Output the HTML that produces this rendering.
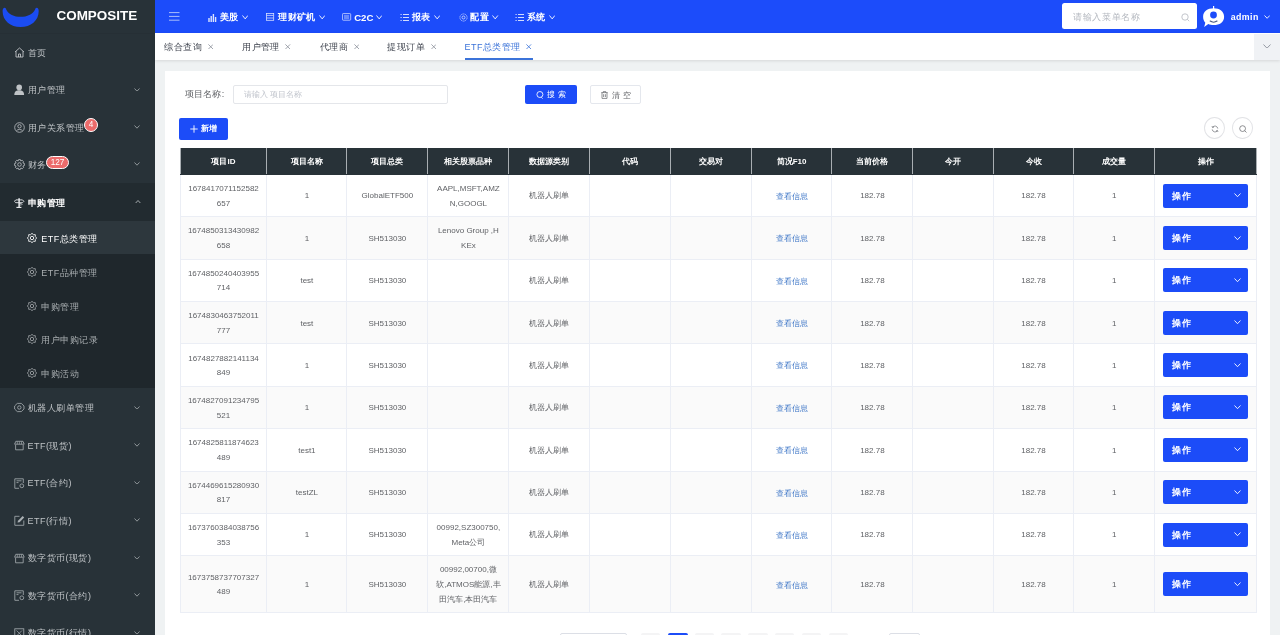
<!DOCTYPE html>
<html><head><meta charset="utf-8"><style>*{box-sizing:border-box;margin:0;padding:0}
html,body{width:1280px;height:635px;overflow:hidden;background:#eff2f3;font-family:"Liberation Sans",sans-serif;}
body{position:relative}
.abs{position:absolute}
#side{position:absolute;left:0;top:0;width:155px;height:635px;background:#283238;overflow:hidden}
#logo{position:absolute;left:0;top:0;width:155px;height:33.5px;background:#283238;border-bottom:1px solid #262f35}
#logo .t{position:absolute;left:56.5px;top:8.2px;font-size:13.45px;font-weight:bold;color:#fff;line-height:16px}
.mi{position:absolute;left:0;width:155px;height:37.5px;color:#bfc3c6;font-size:9px;letter-spacing:0.5px;line-height:37.5px;white-space:nowrap}
.mi .tx{position:absolute;left:27.5px;top:1.3px}
.sub{position:absolute;left:0;width:155px;height:33.5px;color:#a9aeb1;font-size:9px;letter-spacing:0.5px;line-height:33.5px;white-space:nowrap}
.sub .tx{position:absolute;left:41.2px;top:2.8px}
.badge{position:absolute;background:#ec6b6b;color:#fff;font-size:8.2px;line-height:11px;height:13px;border-radius:7.2px;text-align:center;border:1px solid #fff}
#top{position:absolute;left:155px;top:0;width:1125px;height:33px;background:#1c4cfa}
.nav{position:absolute;top:0.8px;height:33px;line-height:33px;color:#fff;font-size:9px;letter-spacing:0.4px;font-weight:bold;white-space:nowrap}
#tabs{position:absolute;left:155px;top:33px;width:1125px;height:26.8px;background:#fff;box-shadow:0 1px 3px rgba(0,0,0,.11)}
.tab{position:absolute;top:1px;height:27px;line-height:27px;font-size:9px;letter-spacing:0.42px;white-space:nowrap}
#card{position:absolute;left:165px;top:70.8px;width:1105px;height:600px;background:#fff}
table{border-collapse:collapse;table-layout:fixed;position:absolute;left:179.6px;top:148.3px;width:1076.4px}
th{background:#283238;color:#fff;font-size:8px;font-weight:bold;height:26.2px;text-align:center;border-left:1px solid #a9aeb2;border-right:1px solid #a9aeb2;border-bottom:1px solid #283238;padding:0}
td{font-size:8px;color:#606266;line-height:14.6px;padding:7.1px 7.4px 5.1px;text-align:center;border:1px solid #ebeef5;word-break:break-all;vertical-align:middle}
tr.s td{background:#fafafa}
.link{color:#3b74c6;position:relative;top:0.6px}
.op{display:block;width:85px;height:24px;background:#1c4cf8;border-radius:2px;position:relative;top:-1.1px;margin-left:0px;color:#fff;font-size:9px;letter-spacing:0.45px;font-weight:bold;text-align:left;line-height:24px;padding-left:9.8px}
td:first-child{padding-left:6px;padding-right:6px}
body{will-change:transform}
</style></head><body>
<div id="side">
  <div id="logo">
    <svg class="abs" style="left:0;top:0" width="45" height="33" viewBox="0 0 45 33"><path d="M4.7 7.8 C3.3 7.8 2.6 9.4 2.6 11.2 C2.6 20.5 10.5 27 20.6 27 C30.7 27 38.7 20.5 38.7 11.2 C38.7 9.3 38 7.8 36.7 7.8 C35.8 7.8 35.4 8.6 35.1 9.4 C32.8 14.2 27 16.8 20.6 16.8 C14.2 16.8 8.5 14.2 6.2 9.4 C5.9 8.6 5.6 7.8 4.7 7.8 Z" fill="#1b4cf2"/></svg>
    <div class="t">COMPOSITE</div>
  </div>
  <div class="mi" style="top:33.5px"><svg class="abs" style="left:13.8px;top:13.5px" width="11" height="11" viewBox="0 0 11 11"><path d="M1 5 L5.5 1 L10 5 M2 4.2 V10 H9 V4.2 M4.5 10 V7 H6.5 V10" fill="none" stroke="#bfc3c6" stroke-width="0.9"/></svg><span class="tx">首页</span></div><div class="mi" style="top:70.9px"><svg class="abs" style="left:13.8px;top:13.5px" width="11" height="11" viewBox="0 0 11 11"><circle cx="5.2" cy="3.4" r="2.8" fill="#bfc3c6"/><path d="M0.3 11 C0.3 7.3 2.6 6.3 5.2 6.3 C7.8 6.3 10.1 7.3 10.1 11 Z" fill="#bfc3c6"/></svg><span class="tx">用户管理</span><svg class="abs" style="left:134px;top:16.8px" width="6" height="3.5" viewBox="0 0 6 3.5"><path d="M0.5 0.5 L3.0 3.2 L5.5 0.5" fill="none" stroke="#9aa0a4" stroke-width="0.9"/></svg></div><div class="mi" style="top:108.3px"><svg class="abs" style="left:13.8px;top:13.5px" width="11" height="11" viewBox="0 0 11 11"><circle cx="5.5" cy="5.5" r="4.8" fill="none" stroke="#bfc3c6" stroke-width="0.8"/><circle cx="5.5" cy="4.3" r="1.7" fill="none" stroke="#bfc3c6" stroke-width="0.8"/><path d="M2.6 8.8 C3.3 7 7.7 7 8.4 8.8" fill="none" stroke="#bfc3c6" stroke-width="0.8"/></svg><span class="tx">用户关系管理</span><svg class="abs" style="left:134px;top:16.8px" width="6" height="3.5" viewBox="0 0 6 3.5"><path d="M0.5 0.5 L3.0 3.2 L5.5 0.5" fill="none" stroke="#9aa0a4" stroke-width="0.9"/></svg></div><div class="mi" style="top:145.6px"><svg class="abs" style="left:13.8px;top:13.5px" width="11" height="11" viewBox="0 0 11 11"><circle cx="5.5" cy="5.5" r="1.8" fill="none" stroke="#bfc3c6" stroke-width="0.8"/><path d="M4.6 0.6 H6.4 L6.8 2 L8.1 1.3 L9.5 2.6 L8.9 4 L10.4 4.5 V6.5 L8.9 7 L9.6 8.4 L8.3 9.7 L6.9 9 L6.4 10.4 H4.6 L4.1 9 L2.7 9.7 L1.4 8.4 L2.1 7 L0.6 6.5 V4.5 L2.1 4 L1.4 2.6 L2.8 1.3 L4.1 2 Z" fill="none" stroke="#bfc3c6" stroke-width="0.8"/></svg><span class="tx">财务</span><svg class="abs" style="left:134px;top:16.8px" width="6" height="3.5" viewBox="0 0 6 3.5"><path d="M0.5 0.5 L3.0 3.2 L5.5 0.5" fill="none" stroke="#9aa0a4" stroke-width="0.9"/></svg></div><div class="badge" style="left:83.8px;top:117.9px;width:14.3px;height:14.2px;line-height:12.2px">4</div><div class="badge" style="left:46.1px;top:155.8px;width:22.8px;height:13.4px;line-height:11.4px">127</div><div class="mi open" style="top:183px;height:37.7px;background:#222b30;color:#fff"><svg class="abs" style="left:13.8px;top:13.5px" width="11" height="11" viewBox="0 0 11 11"><path d="M5.1 1.3 V10.2" stroke="#e8eaec" stroke-width="1.5"/><path d="M1.8 2.9 H8.5 L9.9 4.3 L8.5 5.7 H1.8 L0.4 4.3 Z" fill="none" stroke="#e8eaec" stroke-width="0.9"/><path d="M5.1 6.6 H7.4 L8.1 7.3 L7.4 8 H5.1" fill="none" stroke="#e8eaec" stroke-width="0.7"/><path d="M2.4 10.5 H7.4" stroke="#e8eaec" stroke-width="1.3"/></svg><span class="tx" style="font-weight:bold;top:2.2px">申购管理</span><svg class="abs" style="left:134.5px;top:16.5px" width="6" height="3.5" viewBox="0 0 6 3.5"><path d="M0.5 3.2 L3.0 0.5 L5.5 3.2" fill="none" stroke="#b6babd" stroke-width="0.9"/></svg></div><div class="abs" style="left:0;top:220.7px;width:155px;height:167.7px;background:#1f272c"></div><div class="sub" style="top:220.7px;background:#2d373d;color:#fff;"><svg class="abs" style="left:27px;top:12.8px" width="10" height="10" viewBox="0 0 10 10"><path d="M5.00 0.30 L6.38 1.67 L8.32 1.68 L8.33 3.62 L9.70 5.00 L8.33 6.38 L8.32 8.32 L6.38 8.33 L5.00 9.70 L3.62 8.33 L1.68 8.32 L1.67 6.38 L0.30 5.00 L1.67 3.62 L1.68 1.68 L3.62 1.67 Z" fill="none" stroke="#fff" stroke-width="0.85" stroke-linejoin="round"/><circle cx="5" cy="5" r="1.7" fill="none" stroke="#fff" stroke-width="0.9"/></svg><span class="tx">ETF总类管理</span></div><div class="sub" style="top:254.23999999999998px;"><svg class="abs" style="left:27px;top:12.8px" width="10" height="10" viewBox="0 0 10 10"><path d="M5.00 0.30 L6.38 1.67 L8.32 1.68 L8.33 3.62 L9.70 5.00 L8.33 6.38 L8.32 8.32 L6.38 8.33 L5.00 9.70 L3.62 8.33 L1.68 8.32 L1.67 6.38 L0.30 5.00 L1.67 3.62 L1.68 1.68 L3.62 1.67 Z" fill="none" stroke="#9ea3a6" stroke-width="0.85" stroke-linejoin="round"/><circle cx="5" cy="5" r="1.7" fill="none" stroke="#9ea3a6" stroke-width="0.9"/></svg><span class="tx">ETF品种管理</span></div><div class="sub" style="top:287.78px;"><svg class="abs" style="left:27px;top:12.8px" width="10" height="10" viewBox="0 0 10 10"><path d="M5.00 0.30 L6.38 1.67 L8.32 1.68 L8.33 3.62 L9.70 5.00 L8.33 6.38 L8.32 8.32 L6.38 8.33 L5.00 9.70 L3.62 8.33 L1.68 8.32 L1.67 6.38 L0.30 5.00 L1.67 3.62 L1.68 1.68 L3.62 1.67 Z" fill="none" stroke="#9ea3a6" stroke-width="0.85" stroke-linejoin="round"/><circle cx="5" cy="5" r="1.7" fill="none" stroke="#9ea3a6" stroke-width="0.9"/></svg><span class="tx">申购管理</span></div><div class="sub" style="top:321.32px;"><svg class="abs" style="left:27px;top:12.8px" width="10" height="10" viewBox="0 0 10 10"><path d="M5.00 0.30 L6.38 1.67 L8.32 1.68 L8.33 3.62 L9.70 5.00 L8.33 6.38 L8.32 8.32 L6.38 8.33 L5.00 9.70 L3.62 8.33 L1.68 8.32 L1.67 6.38 L0.30 5.00 L1.67 3.62 L1.68 1.68 L3.62 1.67 Z" fill="none" stroke="#9ea3a6" stroke-width="0.85" stroke-linejoin="round"/><circle cx="5" cy="5" r="1.7" fill="none" stroke="#9ea3a6" stroke-width="0.9"/></svg><span class="tx">用户申购记录</span></div><div class="sub" style="top:354.86px;"><svg class="abs" style="left:27px;top:12.8px" width="10" height="10" viewBox="0 0 10 10"><path d="M5.00 0.30 L6.38 1.67 L8.32 1.68 L8.33 3.62 L9.70 5.00 L8.33 6.38 L8.32 8.32 L6.38 8.33 L5.00 9.70 L3.62 8.33 L1.68 8.32 L1.67 6.38 L0.30 5.00 L1.67 3.62 L1.68 1.68 L3.62 1.67 Z" fill="none" stroke="#9ea3a6" stroke-width="0.85" stroke-linejoin="round"/><circle cx="5" cy="5" r="1.7" fill="none" stroke="#9ea3a6" stroke-width="0.9"/></svg><span class="tx">申购活动</span></div><div class="mi" style="top:388.9px"><svg class="abs" style="left:13.8px;top:13.5px" width="11" height="11" viewBox="0 0 11 11"><circle cx="5.3" cy="5.5" r="1.7" fill="none" stroke="#aab0b4" stroke-width="0.8"/><path d="M3.3 1.4 H7.3 L10 4 V7 L7.3 9.6 H3.3 L0.6 7 V4 Z" fill="none" stroke="#aab0b4" stroke-width="0.8"/></svg><span class="tx">机器人刷单管理</span><svg class="abs" style="left:134px;top:16.8px" width="6" height="3.5" viewBox="0 0 6 3.5"><path d="M0.5 0.5 L3.0 3.2 L5.5 0.5" fill="none" stroke="#9aa0a4" stroke-width="0.9"/></svg></div><div class="mi" style="top:426.45px"><svg class="abs" style="left:13.8px;top:13.5px" width="11" height="11" viewBox="0 0 11 11"><path d="M1.8 1.3 H9 L10.2 4.2 H0.6 Z M1.6 4.8 V9.8 H9.2 V4.8" fill="none" stroke="#aab0b4" stroke-width="0.8"/><path d="M3.3 1.5 V4.2 M5.4 1.5 V4.2 M7.5 1.5 V4.2" stroke="#aab0b4" stroke-width="0.6"/></svg><span class="tx">ETF(现货)</span><svg class="abs" style="left:134px;top:16.8px" width="6" height="3.5" viewBox="0 0 6 3.5"><path d="M0.5 0.5 L3.0 3.2 L5.5 0.5" fill="none" stroke="#9aa0a4" stroke-width="0.9"/></svg></div><div class="mi" style="top:464.0px"><svg class="abs" style="left:13.8px;top:13.5px" width="11" height="11" viewBox="0 0 11 11"><path d="M5 10.3 H0.8 V0.8 H9.3 V5 M2.5 2.8 H7.5 M2.5 4.6 H4.5" fill="none" stroke="#aab0b4" stroke-width="0.8"/><circle cx="7.8" cy="7.8" r="1.9" fill="none" stroke="#aab0b4" stroke-width="0.8"/></svg><span class="tx">ETF(合约)</span><svg class="abs" style="left:134px;top:16.8px" width="6" height="3.5" viewBox="0 0 6 3.5"><path d="M0.5 0.5 L3.0 3.2 L5.5 0.5" fill="none" stroke="#9aa0a4" stroke-width="0.9"/></svg></div><div class="mi" style="top:501.54999999999995px"><svg class="abs" style="left:13.8px;top:13.5px" width="11" height="11" viewBox="0 0 11 11"><path d="M5.5 1.3 H0.8 V10.3 H9.8 V5.5" fill="none" stroke="#aab0b4" stroke-width="0.8"/><path d="M3.5 7.5 L4 5.8 L8.7 1.1 L10.2 2.6 L5.5 7.3 Z" fill="#aab0b4"/></svg><span class="tx">ETF(行情)</span><svg class="abs" style="left:134px;top:16.8px" width="6" height="3.5" viewBox="0 0 6 3.5"><path d="M0.5 0.5 L3.0 3.2 L5.5 0.5" fill="none" stroke="#9aa0a4" stroke-width="0.9"/></svg></div><div class="mi" style="top:539.0999999999999px"><svg class="abs" style="left:13.8px;top:13.5px" width="11" height="11" viewBox="0 0 11 11"><path d="M1.8 1.3 H9 L10.2 4.2 H0.6 Z M1.6 4.8 V9.8 H9.2 V4.8" fill="none" stroke="#aab0b4" stroke-width="0.8"/><path d="M3.3 1.5 V4.2 M5.4 1.5 V4.2 M7.5 1.5 V4.2" stroke="#aab0b4" stroke-width="0.6"/></svg><span class="tx">数字货币(现货)</span><svg class="abs" style="left:134px;top:16.8px" width="6" height="3.5" viewBox="0 0 6 3.5"><path d="M0.5 0.5 L3.0 3.2 L5.5 0.5" fill="none" stroke="#9aa0a4" stroke-width="0.9"/></svg></div><div class="mi" style="top:576.65px"><svg class="abs" style="left:13.8px;top:13.5px" width="11" height="11" viewBox="0 0 11 11"><path d="M5 10.3 H0.8 V0.8 H9.3 V5 M2.5 2.8 H7.5 M2.5 4.6 H4.5" fill="none" stroke="#aab0b4" stroke-width="0.8"/><circle cx="7.8" cy="7.8" r="1.9" fill="none" stroke="#aab0b4" stroke-width="0.8"/></svg><span class="tx">数字货币(合约)</span><svg class="abs" style="left:134px;top:16.8px" width="6" height="3.5" viewBox="0 0 6 3.5"><path d="M0.5 0.5 L3.0 3.2 L5.5 0.5" fill="none" stroke="#9aa0a4" stroke-width="0.9"/></svg></div><div class="mi" style="top:614.1999999999999px"><svg class="abs" style="left:13.8px;top:13.5px" width="11" height="11" viewBox="0 0 11 11"><rect x="0.8" y="0.8" width="9" height="9" fill="none" stroke="#aab0b4" stroke-width="0.8"/><path d="M2.5 2.5 L8 8 M8 2.5 L2.5 8" stroke="#aab0b4" stroke-width="0.7"/></svg><span class="tx">数字货币(行情)</span><svg class="abs" style="left:134px;top:16.8px" width="6" height="3.5" viewBox="0 0 6 3.5"><path d="M0.5 0.5 L3.0 3.2 L5.5 0.5" fill="none" stroke="#9aa0a4" stroke-width="0.9"/></svg></div>
</div>
<div id="top"><svg class="abs" style="left:14.4px;top:12px" width="11" height="9" viewBox="0 0 11 9"><path d="M0 0.6 H10.5 M0 4.4 H10.5 M0 8.2 H10.5" stroke="#a9bdfb" stroke-width="1"/></svg><svg class="abs" style="left:52.8px;top:12.6px" width="10" height="10" viewBox="0 0 10 10"><path d="M1 9 V5 M3.2 9 V3 M5.4 9 V1 M7.6 9 V4" stroke="#fff" stroke-width="1.4" opacity=".85"/></svg><div class="nav" style="left:64.6px">美股</div><svg class="abs" style="left:86.6px;top:15.2px" width="6.4" height="4.2" viewBox="0 0 6.4 4.2"><path d="M0.5 0.5 L3.2 3.9000000000000004 L5.9 0.5" fill="none" stroke="#ffffff" stroke-width="0.9"/></svg><svg class="abs" style="left:111.4px;top:12.6px" width="10" height="10" viewBox="0 0 10 10"><rect x="0.4" y="0.5" width="7.3" height="6.8" fill="none" stroke="#dfe6ff" stroke-width="0.75"/><path d="M0.6 2.4 H7.5 M0.6 5 H7.5" stroke="#dfe6ff" stroke-width="0.75"/></svg><div class="nav" style="left:123.2px">理财矿机</div><svg class="abs" style="left:164.0px;top:15.2px" width="6.4" height="4.2" viewBox="0 0 6.4 4.2"><path d="M0.5 0.5 L3.2 3.9000000000000004 L5.9 0.5" fill="none" stroke="#ffffff" stroke-width="0.9"/></svg><svg class="abs" style="left:187.4px;top:12.6px" width="10" height="10" viewBox="0 0 10 10"><rect x="0.4" y="0.6" width="8.3" height="6.6" rx="0.8" fill="none" stroke="#dfe6ff" stroke-width="0.75"/><path d="M2 3 H7.1 M2 5 H7.1" stroke="#dfe6ff" stroke-width="0.8"/></svg><div class="nav" style="left:199.20000000000002px;font-size:9.6px;letter-spacing:0;top:0.5px">C2C</div><svg class="abs" style="left:221.0px;top:15.2px" width="6.4" height="4.2" viewBox="0 0 6.4 4.2"><path d="M0.5 0.5 L3.2 3.9000000000000004 L5.9 0.5" fill="none" stroke="#ffffff" stroke-width="0.9"/></svg><svg class="abs" style="left:245px;top:12.6px" width="10" height="10" viewBox="0 0 10 10"><path d="M0.5 1.5 H1.7 M3 1.5 H9 M0.5 4.5 H1.7 M3 4.5 H9 M0.5 7.5 H1.7 M3 7.5 H9" stroke="#fff" stroke-width="0.9" opacity=".9"/></svg><div class="nav" style="left:256.8px">报表</div><svg class="abs" style="left:278.8px;top:15.2px" width="6.4" height="4.2" viewBox="0 0 6.4 4.2"><path d="M0.5 0.5 L3.2 3.9000000000000004 L5.9 0.5" fill="none" stroke="#ffffff" stroke-width="0.9"/></svg><svg class="abs" style="left:303.6px;top:12.6px" width="10" height="10" viewBox="0 0 10 10"><circle cx="4.5" cy="4.5" r="3.6" fill="none" stroke="#fff" stroke-width="0.8" stroke-dasharray="1.4 0.8" opacity=".8"/><circle cx="4.5" cy="4.5" r="1.5" fill="none" stroke="#fff" stroke-width="0.8" opacity=".8"/></svg><div class="nav" style="left:315.40000000000003px">配置</div><svg class="abs" style="left:337.40000000000003px;top:15.2px" width="6.4" height="4.2" viewBox="0 0 6.4 4.2"><path d="M0.5 0.5 L3.2 3.9000000000000004 L5.9 0.5" fill="none" stroke="#ffffff" stroke-width="0.9"/></svg><svg class="abs" style="left:360px;top:12.6px" width="10" height="10" viewBox="0 0 10 10"><path d="M0.5 1.5 H1.7 M3 1.5 H9 M0.5 4.5 H1.7 M3 4.5 H9 M0.5 7.5 H1.7 M3 7.5 H9" stroke="#fff" stroke-width="0.9" opacity=".9"/></svg><div class="nav" style="left:371.8px">系统</div><svg class="abs" style="left:393.8px;top:15.2px" width="6.4" height="4.2" viewBox="0 0 6.4 4.2"><path d="M0.5 0.5 L3.2 3.9000000000000004 L5.9 0.5" fill="none" stroke="#ffffff" stroke-width="0.9"/></svg><div class="abs" style="left:907px;top:3px;width:134.6px;height:26.4px;background:#fff;border-radius:2.5px"></div><div class="abs" style="left:918.2px;top:3.6px;line-height:26.4px;font-size:9px;letter-spacing:0.6px;color:#b4b8bf">请输入菜单名称</div><svg class="abs" style="left:1025.5px;top:12.5px" width="9" height="9" viewBox="0 0 9 9"><circle cx="4" cy="4" r="3.2" fill="none" stroke="#b4b8bf" stroke-width="0.8"/><path d="M6.4 6.4 L8.2 8.2" stroke="#b4b8bf" stroke-width="0.8"/></svg><svg class="abs" style="left:1047px;top:5px" width="24" height="24" viewBox="0 0 24 24"><path d="M11.6 1 V4" stroke="#fff" stroke-width="1.2"/><path d="M11.6 3.3 C17.8 3.3 22.1 6.6 22.1 11.7 C22.1 17 17.8 20.1 11.6 20.1 C9.6 20.1 7.7 19.7 6.3 19 L2.2 22 L3.3 17.8 C1.9 16.2 1.1 14.1 1.1 11.7 C1.1 6.6 5.4 3.3 11.6 3.3 Z" fill="#fff"/><circle cx="11.5" cy="10" r="3.4" fill="#1c4cfa"/><path d="M8.2 16.1 C10 17.4 13.2 17.4 15 16.1" fill="none" stroke="#4a5a80" stroke-width="1.2" stroke-linecap="round"/></svg><div class="nav" style="left:1075.8px;top:0.6px;font-size:8.8px">admin</div><svg class="abs" style="left:1108.5px;top:15px" width="6.3" height="3.6" viewBox="0 0 6.3 3.6"><path d="M0.5 0.5 L3.15 3.3000000000000003 L5.8 0.5" fill="none" stroke="#ffffff" stroke-width="0.9"/></svg></div>
<div id="tabs"><div class="tab" style="left:9.299999999999988px;color:#3a3f4a">综合查询</div><svg class="abs" style="left:52.900000000000006px;top:10.8px" width="5.5" height="5.5" viewBox="0 0 5.5 5.5"><path d="M0.4 0.4 L5.1 5.1 M5.1 0.4 L0.4 5.1" stroke="#8a8f99" stroke-width="0.8"/></svg><div class="tab" style="left:87.1px;color:#3a3f4a">用户管理</div><svg class="abs" style="left:130.3px;top:10.8px" width="5.5" height="5.5" viewBox="0 0 5.5 5.5"><path d="M0.4 0.4 L5.1 5.1 M5.1 0.4 L0.4 5.1" stroke="#8a8f99" stroke-width="0.8"/></svg><div class="tab" style="left:164.79999999999998px;color:#3a3f4a">代理商</div><svg class="abs" style="left:198.5px;top:10.8px" width="5.5" height="5.5" viewBox="0 0 5.5 5.5"><path d="M0.4 0.4 L5.1 5.1 M5.1 0.4 L0.4 5.1" stroke="#8a8f99" stroke-width="0.8"/></svg><div class="tab" style="left:232.29999999999998px;color:#3a3f4a">提现订单</div><svg class="abs" style="left:275.8px;top:10.8px" width="5.5" height="5.5" viewBox="0 0 5.5 5.5"><path d="M0.4 0.4 L5.1 5.1 M5.1 0.4 L0.4 5.1" stroke="#8a8f99" stroke-width="0.8"/></svg><div class="tab" style="left:309.6px;color:#3b73d9">ETF总类管理</div><svg class="abs" style="left:371px;top:10.8px" width="5.5" height="5.5" viewBox="0 0 5.5 5.5"><path d="M0.4 0.4 L5.1 5.1 M5.1 0.4 L0.4 5.1" stroke="#3b73d9" stroke-width="0.8"/></svg><div class="abs" style="left:310px;top:25.2px;width:68px;height:1.6px;background:#3b73d9"></div><div class="abs" style="left:1099.3px;top:1px;width:25.7px;height:26px;background:#f0f2f5"></div><svg class="abs" style="left:1108.2px;top:10.5px" width="8" height="4.5" viewBox="0 0 8 4.5"><path d="M0.5 0.5 L4.0 4.2 L7.5 0.5" fill="none" stroke="#8a8f99" stroke-width="0.9"/></svg></div>
<div id="card"></div>
<div class="abs lbl" style="left:184.5px;top:85.4px;line-height:18px;font-size:9px;letter-spacing:0.3px;color:#606266">项目名称:</div><div class="abs" style="left:233.3px;top:84.8px;width:215px;height:18.8px;border:1px solid #e4e6ea;border-radius:2px"></div><div class="abs" style="left:243.6px;top:85.8px;line-height:18px;font-size:7.9px;color:#c0c4cc">请输入 项目名称</div><div class="abs" style="left:525.3px;top:85px;width:51.5px;height:18.8px;background:#1c4cf8;border-radius:2px"></div><svg class="abs" style="left:535.8px;top:90.8px" width="8" height="8" viewBox="0 0 8 8"><circle cx="3.9" cy="3.5" r="3" fill="none" stroke="#fff" stroke-width="0.85"/><path d="M5.3 6.3 L6.6 7.6" stroke="#fff" stroke-width="0.85"/></svg><div class="abs" style="left:547px;top:86.3px;line-height:18.8px;font-size:8px;color:#fff;letter-spacing:3.3px">搜索</div><div class="abs" style="left:589.5px;top:85.4px;width:51px;height:18.4px;border:1px solid #e4e7ed;border-radius:2px;background:#fff"></div><svg class="abs" style="left:600.5px;top:91px" width="7" height="8" viewBox="0 0 7 8"><path d="M0.3 1.6 H6.7 M2.4 1.6 V0.4 H4.6 V1.6 M1 1.6 V7.4 H6 V1.6 M2.6 3.2 V6 M4.4 3.2 V6" fill="none" stroke="#606266" stroke-width="0.7"/></svg><div class="abs" style="left:611.8px;top:86.6px;line-height:18.2px;font-size:8px;color:#606266;letter-spacing:3.2px">清空</div><div class="abs" style="left:179px;top:117.8px;width:49px;height:21.8px;background:#1c4cf8;border-radius:2px"></div><svg class="abs" style="left:189.8px;top:124.6px" width="8" height="8" viewBox="0 0 8 8"><path d="M4 0.3 V7.7 M0.3 4 H7.7" stroke="#fff" stroke-width="0.9"/></svg><div class="abs" style="left:201.2px;top:118px;line-height:21.8px;font-size:8px;color:#fff;font-weight:bold">新增</div><div class="abs" style="left:1204.1px;top:117.4px;width:21px;height:22px;border:1px solid #e2e3e6;border-radius:50%"></div><svg class="abs" style="left:1210.7px;top:124.7px" width="8" height="8" viewBox="0 0 8 8"><path d="M1.6 2.2 A2.9 2.9 0 0 1 6.8 3.6 M6.4 5.8 A2.9 2.9 0 0 1 1.2 4.4" fill="none" stroke="#707278" stroke-width="0.7"/><path d="M1 1 L1.6 2.6 L3 2" fill="none" stroke="#707278" stroke-width="0.7"/><path d="M7 7 L6.4 5.4 L5 6" fill="none" stroke="#707278" stroke-width="0.7"/></svg><div class="abs" style="left:1231.5px;top:117.4px;width:21.5px;height:22px;border:1px solid #e2e3e6;border-radius:50%"></div><svg class="abs" style="left:1238.5px;top:124.7px" width="8" height="8" viewBox="0 0 8 8"><circle cx="3.6" cy="3.6" r="2.9" fill="none" stroke="#606266" stroke-width="0.7"/><path d="M5.7 5.7 L7.5 7.5" stroke="#606266" stroke-width="0.7"/></svg><table><colgroup><col style="width:86.8px"><col style="width:80px"><col style="width:81px"><col style="width:81px"><col style="width:80.8px"><col style="width:80.4px"><col style="width:81px"><col style="width:80.9px"><col style="width:80.8px"><col style="width:80.3px"><col style="width:80.9px"><col style="width:80.7px"><col style="width:101.8px"></colgroup><tr><th>项目ID</th><th>项目名称</th><th>项目总类</th><th>相关股票品种</th><th>数据源类别</th><th>代码</th><th>交易对</th><th>简况F10</th><th>当前价格</th><th>今开</th><th>今收</th><th>成交量</th><th>操作</th></tr><tr><td>1678417071152582657</td><td>1</td><td>GlobalETF500</td><td>AAPL,MSFT,AMZN,GOOGL</td><td>机器人刷单</td><td></td><td></td><td><span class="link">查看信息</span></td><td>182.78</td><td></td><td>182.78</td><td>1</td><td><div class="op">操作<svg class="abs" style="left:71px;top:9.6px" width="7" height="4" viewBox="0 0 7 4"><path d="M0.5 0.5 L3.5 3.7 L6.5 0.5" fill="none" stroke="#ffffff" stroke-width="0.9"/></svg></div></td></tr><tr class="s"><td>1674850313430982658</td><td>1</td><td>SH513030</td><td>Lenovo Group ,HKEx</td><td>机器人刷单</td><td></td><td></td><td><span class="link">查看信息</span></td><td>182.78</td><td></td><td>182.78</td><td>1</td><td><div class="op">操作<svg class="abs" style="left:71px;top:9.6px" width="7" height="4" viewBox="0 0 7 4"><path d="M0.5 0.5 L3.5 3.7 L6.5 0.5" fill="none" stroke="#ffffff" stroke-width="0.9"/></svg></div></td></tr><tr><td>1674850240403955714</td><td>test</td><td>SH513030</td><td></td><td>机器人刷单</td><td></td><td></td><td><span class="link">查看信息</span></td><td>182.78</td><td></td><td>182.78</td><td>1</td><td><div class="op">操作<svg class="abs" style="left:71px;top:9.6px" width="7" height="4" viewBox="0 0 7 4"><path d="M0.5 0.5 L3.5 3.7 L6.5 0.5" fill="none" stroke="#ffffff" stroke-width="0.9"/></svg></div></td></tr><tr class="s"><td>1674830463752011777</td><td>test</td><td>SH513030</td><td></td><td>机器人刷单</td><td></td><td></td><td><span class="link">查看信息</span></td><td>182.78</td><td></td><td>182.78</td><td>1</td><td><div class="op">操作<svg class="abs" style="left:71px;top:9.6px" width="7" height="4" viewBox="0 0 7 4"><path d="M0.5 0.5 L3.5 3.7 L6.5 0.5" fill="none" stroke="#ffffff" stroke-width="0.9"/></svg></div></td></tr><tr><td>1674827882141134849</td><td>1</td><td>SH513030</td><td></td><td>机器人刷单</td><td></td><td></td><td><span class="link">查看信息</span></td><td>182.78</td><td></td><td>182.78</td><td>1</td><td><div class="op">操作<svg class="abs" style="left:71px;top:9.6px" width="7" height="4" viewBox="0 0 7 4"><path d="M0.5 0.5 L3.5 3.7 L6.5 0.5" fill="none" stroke="#ffffff" stroke-width="0.9"/></svg></div></td></tr><tr class="s"><td>1674827091234795521</td><td>1</td><td>SH513030</td><td></td><td>机器人刷单</td><td></td><td></td><td><span class="link">查看信息</span></td><td>182.78</td><td></td><td>182.78</td><td>1</td><td><div class="op">操作<svg class="abs" style="left:71px;top:9.6px" width="7" height="4" viewBox="0 0 7 4"><path d="M0.5 0.5 L3.5 3.7 L6.5 0.5" fill="none" stroke="#ffffff" stroke-width="0.9"/></svg></div></td></tr><tr><td>1674825811874623489</td><td>test1</td><td>SH513030</td><td></td><td>机器人刷单</td><td></td><td></td><td><span class="link">查看信息</span></td><td>182.78</td><td></td><td>182.78</td><td>1</td><td><div class="op">操作<svg class="abs" style="left:71px;top:9.6px" width="7" height="4" viewBox="0 0 7 4"><path d="M0.5 0.5 L3.5 3.7 L6.5 0.5" fill="none" stroke="#ffffff" stroke-width="0.9"/></svg></div></td></tr><tr class="s"><td>1674469615280930817</td><td>testZL</td><td>SH513030</td><td></td><td>机器人刷单</td><td></td><td></td><td><span class="link">查看信息</span></td><td>182.78</td><td></td><td>182.78</td><td>1</td><td><div class="op">操作<svg class="abs" style="left:71px;top:9.6px" width="7" height="4" viewBox="0 0 7 4"><path d="M0.5 0.5 L3.5 3.7 L6.5 0.5" fill="none" stroke="#ffffff" stroke-width="0.9"/></svg></div></td></tr><tr><td>1673760384038756353</td><td>1</td><td>SH513030</td><td>00992,SZ300750,Meta公司</td><td>机器人刷单</td><td></td><td></td><td><span class="link">查看信息</span></td><td>182.78</td><td></td><td>182.78</td><td>1</td><td><div class="op">操作<svg class="abs" style="left:71px;top:9.6px" width="7" height="4" viewBox="0 0 7 4"><path d="M0.5 0.5 L3.5 3.7 L6.5 0.5" fill="none" stroke="#ffffff" stroke-width="0.9"/></svg></div></td></tr><tr class="s"><td>1673758737707327489</td><td>1</td><td>SH513030</td><td>00992,00700,微软,ATMOS能源,丰田汽车,本田汽车</td><td>机器人刷单</td><td></td><td></td><td><span class="link">查看信息</span></td><td>182.78</td><td></td><td>182.78</td><td>1</td><td><div class="op">操作<svg class="abs" style="left:71px;top:9.6px" width="7" height="4" viewBox="0 0 7 4"><path d="M0.5 0.5 L3.5 3.7 L6.5 0.5" fill="none" stroke="#ffffff" stroke-width="0.9"/></svg></div></td></tr></table><div class="abs" style="left:560.4px;top:632.5px;width:66.2px;height:20px;border:1px solid #dcdfe6;border-radius:2px"></div><div class="abs" style="left:640.5px;top:632.5px;width:19.7px;height:20px;background:#f4f4f5;border-radius:2px"></div><div class="abs" style="left:668px;top:632.5px;width:19.7px;height:20px;background:#1c4cf8;border-radius:2px"></div><div class="abs" style="left:694.6px;top:632.5px;width:19.7px;height:20px;background:#f4f4f5;border-radius:2px"></div><div class="abs" style="left:721.3px;top:632.5px;width:19.7px;height:20px;background:#f4f4f5;border-radius:2px"></div><div class="abs" style="left:748px;top:632.5px;width:19.7px;height:20px;background:#f4f4f5;border-radius:2px"></div><div class="abs" style="left:774.8px;top:632.5px;width:19.7px;height:20px;background:#f4f4f5;border-radius:2px"></div><div class="abs" style="left:801.5px;top:632.5px;width:19.7px;height:20px;background:#f4f4f5;border-radius:2px"></div><div class="abs" style="left:828.5px;top:632.5px;width:19.7px;height:20px;background:#f4f4f5;border-radius:2px"></div><div class="abs" style="left:889.4px;top:632.5px;width:30.3px;height:20px;border:1px solid #dcdfe6;border-radius:2px"></div>
</body></html>
